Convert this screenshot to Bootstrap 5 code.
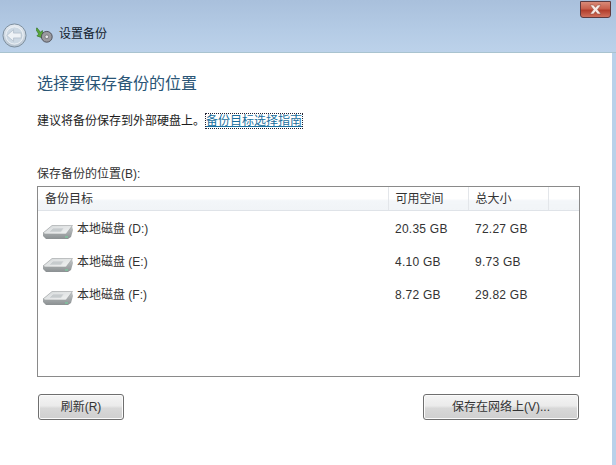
<!DOCTYPE html>
<html lang="zh-CN">
<head>
  <meta charset="UTF-8" />
  <meta name="viewport" content="width=device-width, initial-scale=1" />
  <title>设置备份</title>
  <link href="https://cdn.jsdelivr.net/npm/bootstrap@5.3.2/dist/css/bootstrap.min.css" rel="stylesheet" />
  <style>
    html, body { height: 100%; }
    body {
      font-family: "Liberation Sans", "Noto Sans CJK SC", sans-serif;
      font-size: 12px;
      line-height: 16px;
      color: #1c1c1c;
      background: #b9d1ea;
      overflow: hidden;
    }
    .win-head {
      height: 53px;
      background: linear-gradient(#a9c0dc 0, #b4cbe5 30px, #bcd2ea 100%);
      border-bottom: 1px solid #a9c3cf;
      padding: 0 4px 0 2px;
      position: relative;
    }
    .win-close {
      position: absolute;
      top: 1px;
      right: 5px;
      width: 31px;
      height: 17px;
      border: 1px solid #5d3a3f;
      border-radius: 0 0 3px 3px;
      background: linear-gradient(#d98a78 0, #c8604c 45%, #b23e2c 55%, #cf6f5c 100%);
      padding: 0;
    }
    .win-close svg { display: block; margin: 0 auto; }
    .back-btn { width: 25px; height: 25px; margin-top: 23px; }
    .head-icon { width: 18px; height: 18px; margin: 26px 2px 0 9px; }
    .head-title { margin: 26px 0 0 3px; color: #10202c; }
    .win-body {
      height: 412px;
      margin-right: 4px;
      background: #fff;
      padding: 21px 37px 0 37px;
    }
    .page-title {
      font-size: 16px;
      line-height: 20px;
      font-weight: 400;
      color: #2a5576;
      margin: 0 0 19px;
    }
    .hint-link {
      color: #1a6f9e;
      text-decoration: underline;
      outline: 1px dotted #223;
      outline-offset: 0;
      margin-left: 1px;
    }
    .hint-row { margin-bottom: 37px; }
    .box-label { margin-bottom: 4px; color: #333; }
    .drive-box {
      height: 191px;
      border: 1px solid #8a8a8a;
      margin-bottom: 17px;
      width: 543px;
    }
    .drive-table { width: 100%; table-layout: fixed; border-collapse: collapse; color: #333; }
    .drive-table th {
      height: 23px;
      padding: 2px 0 0 7px;
      font-weight: 400;
      background: linear-gradient(#fff 0, #fff 50%, #f3f6f9 60%, #f1f4f7 100%);
      border-bottom: 1px solid #dfe3e8;
      border-right: 1px solid #e3e6ea;
    }
    .drive-table th:last-child { border-right: 0; }
    .drive-table td { height: 33px; padding: 0 0 0 7px; vertical-align: middle; letter-spacing: .25px; }
    .drive-table tr.first-row td { padding-top: 2px; height: 35px; }
    .col-name { width: 350px; }
    .col-free { width: 80px; }
    .col-size { width: 80px; }
    .drive-name { display: flex; align-items: flex-start; letter-spacing: 0; }
    .drive-name svg { margin: 6px 3px 0 -3px; flex: none; }
    .drive-name span { margin-top: 5px; }
    .win-btn {
      font-size: 12px;
      line-height: 16px;
      height: 26px;
      padding: 0;
      color: #333;
      border: 1px solid #6f6f6f;
      border-radius: 3px;
      background: linear-gradient(#f4f4f4 0, #ebebeb 45%, #d8d8d8 55%, #cfcfcf 100%);
      box-shadow: inset 0 0 0 1px #fbfbfb;
    }
    .btn-refresh { width: 86px; margin-left: 1px; }
    .btn-network { width: 156px; margin-right: 1px; }
    .btn-row { width: 543px; }
  </style>
</head>
<body>

  <div class="win-head d-flex align-items-start">
    <svg class="back-btn" viewBox="0 0 26 26">
      <defs>
        <linearGradient id="ring" x1="0" y1="0" x2="0" y2="1">
          <stop offset="0" stop-color="#e6ecf2" />
          <stop offset="1" stop-color="#b6c3d0" />
        </linearGradient>
      </defs>
      <circle cx="13" cy="13" r="12" fill="url(#ring)" stroke="#7a8b9b" />
      <circle cx="13" cy="13" r="9" fill="#ccd8e3" stroke="#eef3f7" />
      <path d="M5 13l7-6v3.500h8v5h-8V19z" fill="#eef2f6" stroke="#a5b3c0" stroke-width=".6" />
    </svg>
    <svg class="head-icon" viewBox="0 0 20 20">
      <path d="M1 2l4 5 2-2 2 9-8-3 2-2-3-5z" fill="#5aa83c" stroke="#2f6d20" stroke-width=".7" />
      <circle cx="12" cy="12" r="6" fill="#9a9a9f" stroke="#4b4b52" />
      <circle cx="12" cy="12" r="2" fill="#e8e8ea" stroke="#55555c" stroke-width=".6" />
    </svg>
    <div class="head-title">设置备份</div>
    <button class="win-close" type="button" aria-label="关闭">
      <svg width="13" height="11" viewBox="0 0 13 11"><path d="M1 1h3.500l2 2.400L8.500 1H12L8.500 5.500 12 10H8.500l-2-2.500-2 2.500H1l3.500-4.500z" fill="#f7ebe7" stroke="#8a4436" stroke-width=".5" /></svg>
    </button>
  </div>

  <div class="win-body">
    <h1 class="page-title">选择要保存备份的位置</h1>
    <div class="hint-row">建议将备份保存到外部硬盘上。<a class="hint-link" href="#">备份目标选择指南</a></div>
    <div class="box-label">保存备份的位置(B):</div>
    <div class="drive-box">
      <table class="drive-table">
        <colgroup><col class="col-name" /><col class="col-free" /><col class="col-size" /><col /></colgroup>
        <thead>
          <tr><th>备份目标</th><th>可用空间</th><th>总大小</th><th></th></tr>
        </thead>
        <tbody>
          <tr class="first-row">
            <td><div class="drive-name"><svg width="32" height="20" viewBox="0 0 32 20"><use href="#disk" /></svg><span>本地磁盘 (D:)</span></div></td>
            <td>20.35 GB</td><td>72.27 GB</td><td></td>
          </tr>
          <tr>
            <td><div class="drive-name"><svg width="32" height="20" viewBox="0 0 32 20"><use href="#disk" /></svg><span>本地磁盘 (E:)</span></div></td>
            <td>4.10 GB</td><td>9.73 GB</td><td></td>
          </tr>
          <tr>
            <td><div class="drive-name"><svg width="32" height="20" viewBox="0 0 32 20"><use href="#disk" /></svg><span>本地磁盘 (F:)</span></div></td>
            <td>8.72 GB</td><td>29.82 GB</td><td></td>
          </tr>
        </tbody>
      </table>
    </div>
    <div class="btn-row d-flex justify-content-between">
      <button class="btn win-btn btn-refresh" type="button">刷新(R)</button>
      <button class="btn win-btn btn-network" type="button">保存在网络上(V)...</button>
    </div>
  </div>

  <svg width="0" height="0" class="position-absolute">
    <defs>
      <linearGradient id="diskTop" x1="0" y1="0" x2="1" y2="1">
        <stop offset="0" stop-color="#d4d8d9" />
        <stop offset="1" stop-color="#f2f3f3" />
      </linearGradient>
      <linearGradient id="diskSide" x1="0" y1="0" x2="0" y2="1">
        <stop offset="0" stop-color="#c4c8c9" />
        <stop offset="1" stop-color="#8b9092" />
      </linearGradient>
      <symbol id="disk" viewBox="0 0 32 20">
        <path d="M1 11L10 4h20l1 4-2 7-3 2H4l-3-3z" fill="url(#diskSide)" />
        <path d="M1 11L10 3.500h20.500L24 12H3z" fill="url(#diskTop)" stroke="#9a9ea0" stroke-width=".6" />
        <path d="M11 6h11l-3 4H7z" fill="#c6cbcd" stroke="#e6e8e9" stroke-width=".6" />
        <path d="M23 15h3" stroke="#7ad0a0" stroke-width="1.200" />
      </symbol>
    </defs>
  </svg>

  <script src="https://cdn.jsdelivr.net/npm/bootstrap@5.3.2/dist/js/bootstrap.bundle.min.js"></script>
</body>
</html>
